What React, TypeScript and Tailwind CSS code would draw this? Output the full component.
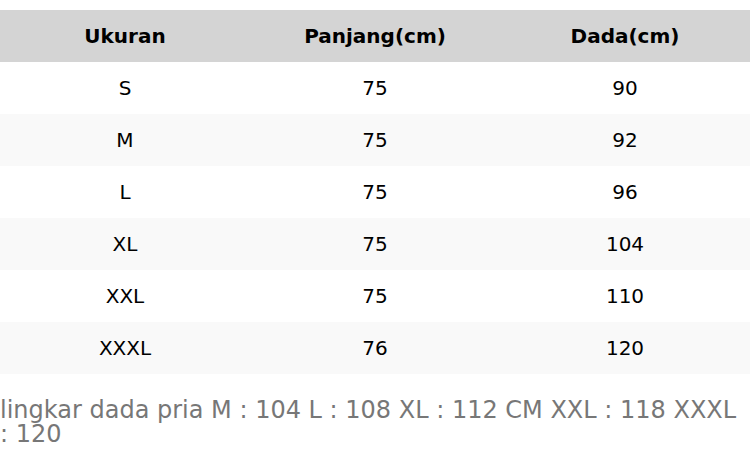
const rows = [
  ["S", "75", "90"],
  ["M", "75", "92"],
  ["L", "75", "96"],
  ["XL", "75", "104"],
  ["XXL", "75", "110"],
  ["XXXL", "76", "120"],
];

export default function App() {
  return (
    <div className="w-[750px] bg-white font-['DejaVu_Sans',sans-serif] text-black">
      <table className="mt-[10px] w-full table-fixed border-collapse text-[20px]">
        <thead>
          <tr className="h-[52px] bg-[#d4d4d4]">
            <th className="font-bold">Ukuran</th>
            <th className="font-bold">Panjang(cm)</th>
            <th className="font-bold">Dada(cm)</th>
          </tr>
        </thead>
        <tbody>
          {rows.map((r, i) => (
            <tr key={i} className={i % 2 === 1 ? "h-[52px] bg-[#f9f9f9]" : "h-[52px] bg-white"}>
              {r.map((c, j) => (
                <td key={j} className="text-center">{c}</td>
              ))}
            </tr>
          ))}
        </tbody>
      </table>
      <p className="mt-[24px] text-[24px] leading-[24px] text-[#777777]">
        lingkar dada pria M : 104 L : 108 XL : 112 CM XXL : 118 XXXL : 120
      </p>
    </div>
  );
}
